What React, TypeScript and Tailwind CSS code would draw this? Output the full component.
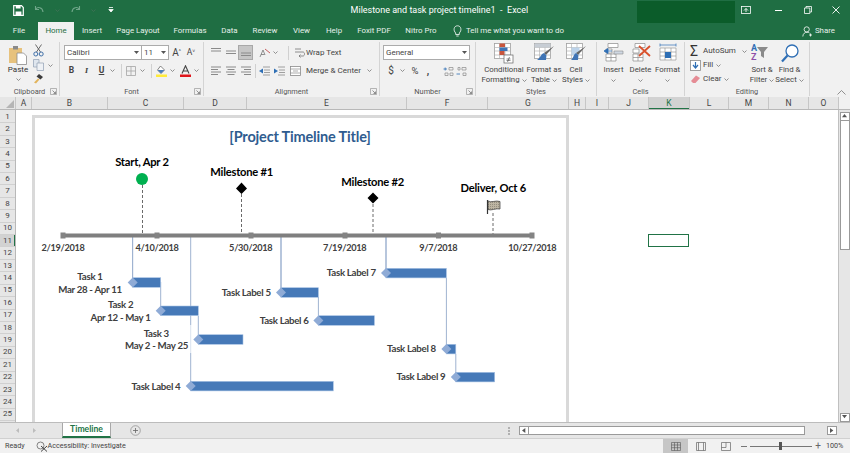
import type { ReactNode } from "react";

const uiFont = "font-['Roboto','Open_Sans',sans-serif]";
const chartFont = "font-['Lato','Open_Sans',sans-serif]";

const tabs = [
  { label: "File", w: "w-[38px]" },
  { label: "Home", w: "w-[36px]", active: true },
  { label: "Insert", w: "w-[36px]" },
  { label: "Page Layout", w: "w-[56px]" },
  { label: "Formulas", w: "w-[48px]" },
  { label: "Data", w: "w-[31px]" },
  { label: "Review", w: "w-[40px]" },
  { label: "View", w: "w-[33px]" },
  { label: "Help", w: "w-[32px]" },
  { label: "Foxit PDF", w: "w-[48px]" },
  { label: "Nitro Pro", w: "w-[46px]" },
];

const columns = [
  { label: "A", w: "w-[16px]" },
  { label: "B", w: "w-[76px]" },
  { label: "C", w: "w-[76px]" },
  { label: "D", w: "w-[63px]" },
  { label: "E", w: "w-[160px]" },
  { label: "F", w: "w-[81px]" },
  { label: "G", w: "w-[81px]" },
  { label: "H", w: "w-[17px]" },
  { label: "I", w: "w-[23px]" },
  { label: "J", w: "w-[40px]" },
  { label: "K", w: "w-[41px]", active: true },
  { label: "L", w: "w-[39px]" },
  { label: "M", w: "w-[40px]" },
  { label: "N", w: "w-[40px]" },
  { label: "O", w: "w-[30px]" },
];

const rows = Array.from({ length: 25 }, (_, i) => i + 1);

// bar: x1, x2, top, parent line start
const bars = [
  { x1: 132.7, x2: 160.7, y: 277.7, from: 237 },
  { x1: 160.7, x2: 198.3, y: 306, from: 282 },
  { x1: 198.3, x2: 243, y: 334.7, from: 316 },
  { x1: 281, x2: 318.4, y: 287.7, from: 237 },
  { x1: 318.4, x2: 374.4, y: 315.7, from: 297 },
  { x1: 386, x2: 446.4, y: 268.3, from: 237 },
  { x1: 446.4, x2: 455.8, y: 344.3, from: 278 },
  { x1: 455.8, x2: 494.7, y: 372.3, from: 354 },
];

const Caret = ({ className = "" }: { className?: string }) => (
  <svg width="5" height="3" viewBox="0 0 5 3" className={className}>
    <path d="M0.5 0.5 L2.5 2.5 L4.5 0.5" fill="none" stroke="#777" strokeWidth="0.8" />
  </svg>
);

const Sep = () => <div className="w-px h-[14px] bg-[#d0d0d0]" />;

const Launcher = () => (
  <svg width="7" height="7" viewBox="0 0 7 7">
    <path d="M0.5 0.5 H6.5 V6.5 H0.5 Z" fill="none" stroke="#999" strokeWidth="0.7" />
    <path d="M2.5 2.5 L5.5 5.5 M5.5 3.5 V5.5 H3.5" fill="none" stroke="#666" strokeWidth="0.7" />
  </svg>
);

const Group = ({ w, label, launcher, children }: { w: string; label: string; launcher?: boolean; children: ReactNode }) => (
  <div className={`${w} h-[54px] mt-[2px] border-r border-[#d4d4d4] flex flex-col shrink-0`}>
    <div className="h-[45px]">{children}</div>
    <div className="relative h-[9px] flex items-center justify-center text-[7.4px] leading-none text-[#555]">
      {label}
      {launcher && (
        <span className="absolute right-[2px] top-px">
          <Launcher />
        </span>
      )}
    </div>
  </div>
);

const Lines = ({ d }: { d: string }) => (
  <svg width="12" height="11" viewBox="0 0 12 11">
    <path d={d} fill="none" stroke="#8a8a8a" strokeWidth="1" />
  </svg>
);

const Cell = ({ w = "w-[15px]", children, className = "" }: { w?: string; children?: ReactNode; className?: string }) => (
  <div className={`${w} h-[15px] flex items-center justify-center shrink-0 ${className}`}>{children}</div>
);

const BigButton = ({ icon, line1, line2, w }: { icon: ReactNode; line1: string; line2?: string; w: string }) => (
  <div className={`${w} flex flex-col items-center shrink-0`}>
    <div className="h-[22px] flex items-center justify-center">{icon}</div>
    <div className="text-[7.8px] leading-[10px] text-[#444] mt-px whitespace-nowrap">{line1}</div>
    <div className="h-[10px] flex items-center gap-[2px] text-[7.8px] leading-[10px] text-[#444] whitespace-nowrap">
      {line2}
      <Caret />
    </div>
  </div>
);

const GridIcon = ({ children }: { children?: ReactNode }) => (
  <svg width="22" height="22" viewBox="0 0 22 22">
    <rect x="1.5" y="1.5" width="16" height="15" fill="#fff" stroke="#a0a0a0" strokeWidth="0.8" />
    <path d="M1.5 5.5 H17.5 M1.5 9 H17.5 M1.5 13 H17.5 M6.5 1.5 V16.5 M12 1.5 V16.5" stroke="#b5b5b5" strokeWidth="0.7" />
    {children}
  </svg>
);

const Header = () => (
  <div className="bg-[#1f6e43] text-white h-[40px] shrink-0">
    <div className="h-[22px] flex items-start">
      <div className="w-[352px] h-[20px] flex items-center pl-[13px] gap-[10px]">
        <svg width="11" height="11" viewBox="0 0 11 11">
          <path d="M0.7 0.7 H8.5 L10.3 2.5 V10.3 H0.7 Z" fill="none" stroke="#fff" strokeWidth="1.2" />
          <path d="M2.8 0.9 H7.6 V3.6 H2.8 Z M2.6 6.4 H8.4 V10 H2.6 Z" fill="#fff" />
        </svg>
        <svg width="11" height="10" viewBox="0 0 11 10">
          <path d="M1.5 1 V4.5 H5 M1.8 4.3 C3.5 1.5 8.5 2 9 7" fill="none" stroke="#6fa689" strokeWidth="1.1" />
        </svg>
        <Caret className="opacity-40" />
        <svg width="11" height="10" viewBox="0 0 11 10">
          <path d="M9.5 1 V4.5 H6 M9.2 4.3 C7.5 1.5 2.5 2 2 7" fill="none" stroke="#6fa689" strokeWidth="1.1" />
        </svg>
        <Caret className="opacity-40" />
        <svg width="6" height="6" viewBox="0 0 6 6" className="ml-[2px]">
          <path d="M1 0.5 H5 M0.8 2.5 H5.2 L3 5 Z" stroke="#fff" strokeWidth="0.8" fill="#fff" />
        </svg>
      </div>
      <div className="w-[288px] h-[20px] flex items-center text-[9px] leading-none whitespace-nowrap">
        Milestone and task project timeline1&nbsp; -&nbsp; Excel
      </div>
      <div className="w-[98px] h-[22px] mt-px bg-[#0b5c2a]" />
      <div className="flex-1 h-[20px] flex items-center">
        <Cell w="w-[22px]">
          <svg width="10" height="8" viewBox="0 0 10 8">
            <rect x="0.5" y="0.5" width="9" height="7" fill="none" stroke="#fff" strokeWidth="0.8" />
            <path d="M3 4.5 L5 2.5 L7 4.5 M5 2.5 V6" fill="none" stroke="#fff" strokeWidth="0.9" />
          </svg>
        </Cell>
        <Cell w="w-[29px]" className="ml-[7px]">
          <div className="w-[7px] h-px bg-white" />
        </Cell>
        <Cell w="w-[29px]">
          <svg width="8" height="8" viewBox="0 0 8 8">
            <path d="M0.5 2 H5.8 V7.5 H0.5 Z M2 2 V0.5 H7.5 V6 H5.8" fill="none" stroke="#fff" strokeWidth="0.8" />
          </svg>
        </Cell>
        <Cell w="w-[28px]">
          <svg width="8" height="8" viewBox="0 0 8 8">
            <path d="M0.5 0.5 L7.5 7.5 M7.5 0.5 L0.5 7.5" stroke="#fff" strokeWidth="0.9" />
          </svg>
        </Cell>
      </div>
    </div>
    <div className="h-[18px] flex text-[7.9px] leading-none">
      {tabs.map((t) => (
        <div
          key={t.label}
          className={`${t.w} h-full flex items-center justify-center whitespace-nowrap ${
            t.active ? "bg-[#f1f1f1] text-[#1f6e43]" : "text-[#e6f0ea]"
          }`}
        >
          {t.label}
        </div>
      ))}
      <div className="ml-[9px] flex items-center gap-[4px] text-[#e6f0ea]">
        <svg width="9" height="12" viewBox="0 0 9 12">
          <path d="M2.7 8 C0 5.5 0.8 0.8 4.5 0.8 C8.2 0.8 9 5.5 6.3 8 V9.5 H2.7 Z M3.3 11 H5.7" fill="none" stroke="#fff" strokeWidth="0.8" />
        </svg>
        <span className="whitespace-nowrap">Tell me what you want to do</span>
      </div>
      <div className="ml-auto mr-[15px] flex items-center gap-[2px] text-[#e6f0ea]">
        <svg width="11" height="11" viewBox="0 0 11 11">
          <circle cx="4.7" cy="3.4" r="2.6" fill="none" stroke="#fff" strokeWidth="0.8" />
          <path d="M0.8 10.5 C1 7.5 3 6.2 5 6.2 C6 6.2 6.8 6.5 7.5 7 M8.5 7.5 V10.5 M7 9 H10" fill="none" stroke="#fff" strokeWidth="0.8" />
        </svg>
        Share
      </div>
    </div>
  </div>
);

const Clipboard = () => (
  <Group w="w-[60px]" label="Clipboard" launcher>
    <div className="flex pl-[5px]">
      <div className="w-[26px] flex flex-col items-center">
        <svg width="20" height="20" viewBox="0 0 20 20" className="mt-[3px]">
          <path d="M1 3 H14 V18 H1 Z" fill="#e7c27d" />
          <rect x="5" y="1" width="5" height="3.5" fill="#8a8a8a" />
          <path d="M9 8 H15.5 L18.5 11 V19.5 H9 Z" fill="#fff" stroke="#8a8a8a" strokeWidth="0.8" />
        </svg>
        <div className="text-[8px] leading-[10px] text-[#333]">Paste</div>
        <Caret className="mt-[3px]" />
      </div>
      <div className="flex flex-col pl-[2px] pt-[2px] gap-[2px]">
        <svg width="11" height="13" viewBox="0 0 11 13">
          <path d="M2.5 0.5 L7.5 8 M8.5 0.5 L3.5 8" stroke="#5a5a5a" strokeWidth="0.9" />
          <circle cx="2.8" cy="10" r="2" fill="none" stroke="#3f6fa8" strokeWidth="1" />
          <circle cx="8.2" cy="10" r="2" fill="none" stroke="#3f6fa8" strokeWidth="1" />
        </svg>
        <div className="flex items-center gap-[4px]">
          <svg width="11" height="12" viewBox="0 0 11 12">
            <path d="M0.5 0.5 H6 V8 H0.5 Z" fill="#dfe6ee" stroke="#8f9fb3" strokeWidth="0.7" />
            <path d="M4 4 H10.5 V11.5 H4 Z" fill="#eef1f5" stroke="#8f9fb3" strokeWidth="0.7" />
          </svg>
          <Caret />
        </div>
        <svg width="11" height="11" viewBox="0 0 11 11">
          <path d="M6 1 L10 4 L7.5 6.5 L3.5 3.5 Z" fill="#3b3b3b" />
          <path d="M5 5.5 L1 9.5 L3 10.5 L6.5 6.5 Z" fill="#e2b45c" />
        </svg>
      </div>
    </div>
  </Group>
);

const FontGroup = () => (
  <Group w="w-[144px]" label="Font" launcher>
    <div className="pl-[4px] pt-[3px] flex flex-col gap-[3px]">
      <div className="flex items-center">
        <div className="w-[78px] h-[15px] bg-white border border-[#ababab] flex items-center justify-between px-[2px] text-[8px] text-[#444]">
          Calibri
          <svg width="5" height="3" viewBox="0 0 5 3"><path d="M0 0 H5 L2.5 3 Z" fill="#555" /></svg>
        </div>
        <div className="w-[27px] h-[15px] bg-white border border-l-0 border-[#ababab] flex items-center justify-between px-[2px] text-[8px] text-[#444]">
          11
          <svg width="5" height="3" viewBox="0 0 5 3"><path d="M0 0 H5 L2.5 3 Z" fill="#555" /></svg>
        </div>
        <div className="w-[15px] text-center text-[10px] leading-none text-[#444]">A<sup className="text-[5px]">^</sup></div>
        <div className="w-[14px] text-center text-[8.5px] leading-none text-[#444]">A<sup className="text-[5px]">˅</sup></div>
      </div>
      <div className="flex items-center text-[8.5px] text-[#444]">
        <Cell className="font-bold">B</Cell>
        <Cell className="italic font-serif font-bold">I</Cell>
        <Cell className="underline font-bold">U</Cell>
        <Cell w="w-[7px]"><Caret /></Cell>
        <div className="ml-[5px]"><Sep /></div>
        <Cell w="w-[16px]" className="ml-px">
          <svg width="10" height="10" viewBox="0 0 10 10">
            <path d="M0.5 0.5 H9.5 V9.5 H0.5 Z M5 0.5 V9.5 M0.5 5 H9.5" fill="none" stroke="#a5a5a5" strokeWidth="0.8" />
          </svg>
        </Cell>
        <Cell w="w-[7px]"><Caret /></Cell>
        <div className="ml-[5px]"><Sep /></div>
        <Cell w="w-[16px]" className="ml-px">
          <svg width="11" height="12" viewBox="0 0 11 12">
            <path d="M4.5 1 L8.5 5 L5 8.5 L1.5 5 Z" fill="#fff" stroke="#666" strokeWidth="0.8" />
            <path d="M1.5 5 L8.5 5 L5 8.5 Z" fill="#4a7ebb" />
            <rect x="0" y="9.5" width="11" height="2.5" fill="#ffeb3b" />
          </svg>
        </Cell>
        <Cell w="w-[7px]"><Caret /></Cell>
        <Cell w="w-[15px]" className="ml-[2px]">
          <svg width="11" height="12" viewBox="0 0 11 12">
            <path d="M2 8.5 L5.5 0.8 L9 8.5 M3.3 6 H7.7" fill="none" stroke="#444" strokeWidth="1.1" />
            <rect x="0" y="9.5" width="11" height="2.5" fill="#e0161c" />
          </svg>
        </Cell>
        <Cell w="w-[7px]"><Caret /></Cell>
      </div>
    </div>
  </Group>
);

const Alignment = () => (
  <Group w="w-[176px]" label="Alignment" launcher>
    <div className="pl-[4px] pt-[3px] flex flex-col gap-[3px] text-[8px] text-[#444]">
      <div className="flex items-center">
        <Cell><Lines d="M1 1.5 H11 M1 4 H11" /></Cell>
        <Cell><Lines d="M1 4 H11 M1 6.5 H11" /></Cell>
        <Cell className="bg-[#c6c6c6] border border-[#a8a8a8]"><Lines d="M1 6 H11 M1 8.5 H11" /></Cell>
        <Cell w="w-[14px]" className="ml-[5px]">
          <svg width="12" height="12" viewBox="0 0 12 12">
            <path d="M1 10 L4 3 L6 8 M2 7.5 H5.5" fill="none" stroke="#777" strokeWidth="0.8" />
            <path d="M6 2 L11 6" stroke="#c05050" strokeWidth="0.9" />
          </svg>
        </Cell>
        <Cell w="w-[6px]"><Caret /></Cell>
        <div className="ml-[10px]"><Sep /></div>
        <Cell w="w-[14px]" className="ml-[3px]">
          <svg width="11" height="11" viewBox="0 0 11 11">
            <path d="M1 2 H7 M1 5 H9 C11 5 11 9 9 9 H5 M6.5 7.5 L5 9 L6.5 10.5" fill="none" stroke="#777" strokeWidth="0.8" />
          </svg>
        </Cell>
        <span className="whitespace-nowrap">Wrap Text</span>
      </div>
      <div className="flex items-center">
        <Cell><Lines d="M1 2 H11 M1 4.5 H8 M1 7 H11 M1 9.5 H8" /></Cell>
        <Cell><Lines d="M1 2 H11 M2.5 4.5 H9.5 M1 7 H11 M2.5 9.5 H9.5" /></Cell>
        <Cell><Lines d="M1 2 H11 M4 4.5 H11 M1 7 H11 M4 9.5 H11" /></Cell>
        <div className="ml-[2px]"><Sep /></div>
        <Cell w="w-[15px]" className="ml-px">
          <svg width="11" height="10" viewBox="0 0 11 10">
            <path d="M4 1 H11 M5 4 H11 M5 6.5 H11 M4 9 H11" stroke="#8a8a8a" strokeWidth="0.8" />
            <path d="M0 5 L4 2.5 V7.5 Z" fill="#2f6fb5" />
          </svg>
        </Cell>
        <Cell w="w-[15px]">
          <svg width="11" height="10" viewBox="0 0 11 10">
            <path d="M4 1 H11 M5 4 H11 M5 6.5 H11 M4 9 H11" stroke="#8a8a8a" strokeWidth="0.8" />
            <path d="M4 5 L0 2.5 V7.5 Z" fill="#2f6fb5" />
          </svg>
        </Cell>
        <Cell w="w-[14px]" className="ml-[1px]">
          <svg width="11" height="10" viewBox="0 0 11 10">
            <rect x="0.5" y="0.5" width="10" height="9" fill="#fff" stroke="#8a8a8a" strokeWidth="0.8" />
            <path d="M0.5 3 H10.5 M0.5 7 H10.5 M3 5 H8" stroke="#8a8a8a" strokeWidth="0.7" />
          </svg>
        </Cell>
        <span className="ml-[4px] whitespace-nowrap">Merge &amp; Center</span>
        <Caret className="ml-[6px]" />
      </div>
    </div>
  </Group>
);

const NumberGroup = () => (
  <Group w="w-[96px]" label="Number" launcher>
    <div className="pl-[3px] pt-[3px] flex flex-col gap-[3px] text-[#444]">
      <div className="w-[87px] h-[15px] bg-white border border-[#ababab] flex items-center justify-between px-[2px] text-[8px]">
        General
        <svg width="5" height="3" viewBox="0 0 5 3"><path d="M0 0 H5 L2.5 3 Z" fill="#555" /></svg>
      </div>
      <div className="flex items-center text-[10px] leading-none">
        <Cell w="w-[16px]">$</Cell>
        <Cell w="w-[7px]"><Caret /></Cell>
        <Cell w="w-[16px]" className="ml-px text-[9.5px]">%</Cell>
        <Cell w="w-[8px]" className="ml-px font-bold">,</Cell>
        <Cell w="w-[13px]" className="ml-[10px]">
          <svg width="11" height="10" viewBox="0 0 11 10">
            <path d="M0.5 3 H4 M2.2 1.5 V4.5" stroke="#2f6fb5" strokeWidth="0.8" />
            <path d="M6 1.5 H10 V4 H6 Z M2 7 H5 V9.5 H2 Z M7 7 H10 V9.5 H7 Z" fill="none" stroke="#8a8a8a" strokeWidth="0.7" />
          </svg>
        </Cell>
        <Cell w="w-[13px]">
          <svg width="11" height="10" viewBox="0 0 11 10">
            <path d="M0.5 8 H4" stroke="#2f6fb5" strokeWidth="0.8" />
            <path d="M6 1.5 H10 V4 H6 Z M2 1.5 H4 V4 H2 Z M7 7 H10 V9.5 H7 Z" fill="none" stroke="#8a8a8a" strokeWidth="0.7" />
          </svg>
        </Cell>
      </div>
    </div>
  </Group>
);

const Styles = () => (
  <Group w="w-[121px]" label="Styles">
    <div className="flex pl-[3px]">
      <BigButton
        w="w-[50px]"
        line1="Conditional"
        line2="Formatting"
        icon={
          <GridIcon>
            <rect x="6.5" y="1.5" width="5.5" height="3.5" fill="#c8553d" />
            <rect x="6.5" y="5.5" width="8" height="3.5" fill="#3f74b5" />
            <rect x="6.5" y="9" width="5" height="4" fill="#c8553d" />
            <rect x="11" y="13" width="9" height="8" fill="#fff" stroke="#666" strokeWidth="0.7" />
            <path d="M13.5 17 H17.5 M13.5 18.5 H17.5 M16.5 15 L14.5 20" stroke="#444" strokeWidth="0.6" />
          </GridIcon>
        }
      />
      <BigButton
        w="w-[30px]"
        line1="Format as"
        line2="Table"
        icon={
          <GridIcon>
            <rect x="1.5" y="1.5" width="16" height="4" fill="#c7cdd4" />
            <path d="M21 4 L13 13 L11 11 Z" fill="#666" />
            <path d="M11 11 C8 12 8 15 4 18 H13 C13 15 14 13 13 13 Z" fill="#3f74b5" />
          </GridIcon>
        }
      />
      <BigButton
        w="w-[34px]"
        line1="Cell"
        line2="Styles"
        icon={
          <GridIcon>
            <rect x="6.5" y="5.5" width="8" height="7.5" fill="#bcd3ea" />
            <path d="M21 4 L13 13 L11 11 Z" fill="#666" />
            <path d="M11 11 C8 13 9 15 6 18 H13 C13 15 14 13 13 13 Z" fill="#3f74b5" />
          </GridIcon>
        }
      />
    </div>
  </Group>
);

const CellIcon = ({ children }: { children: ReactNode }) => (
  <svg width="22" height="22" viewBox="0 0 22 22">
    <path d="M5 1.5 H15 V5.5 H5 Z M3 7 H9 V11 H3 Z M3 12 H13 V19 H3 Z M8 12 V19 M3 15.5 H13" fill="#fff" stroke="#8a8a8a" strokeWidth="0.7" />
    {children}
  </svg>
);

const Cells = () => (
  <Group w="w-[88px]" label="Cells">
    <div className="flex pl-[3px]">
      <BigButton
        w="w-[27px]"
        line1="Insert"
        icon={
          <CellIcon>
            <path d="M11 9 H20 V12 H11 Z" fill="#cfd8e3" stroke="#8a8a8a" strokeWidth="0.6" />
            <path d="M1 9 L5 6.5 V11.5 Z M4 9 H9" fill="#2f6fb5" stroke="#2f6fb5" strokeWidth="0.8" />
          </CellIcon>
        }
      />
      <BigButton
        w="w-[27px]"
        line1="Delete"
        icon={
          <CellIcon>
            <path d="M9 4 L20 14 M20 4 L9 14" stroke="#d9512c" strokeWidth="1.8" />
          </CellIcon>
        }
      />
      <BigButton
        w="w-[27px]"
        line1="Format"
        icon={
          <svg width="20" height="20" viewBox="0 0 20 20">
            <path d="M2 5 H18 V17 H2 Z M7 5 V17 M13 5 V17 M2 9 H18 M2 13 H18" fill="#fff" stroke="#8a8a8a" strokeWidth="0.6" />
            <rect x="7" y="9" width="6" height="6" fill="#2f6fb5" />
            <path d="M2 2 H18 M2 0.5 V3.5 M18 0.5 V3.5" stroke="#2f6fb5" strokeWidth="0.7" />
          </svg>
        }
      />
    </div>
  </Group>
);

const Editing = () => (
  <Group w="w-[125px]" label="Editing">
    <div className="flex pl-[5px]">
      <div className="w-[58px] flex flex-col text-[8px] text-[#444] pt-[2px]">
        <div className="h-[14px] flex items-center">
          <span className="w-[13px] text-[14px] leading-none text-[#333]">Σ</span>
          <span>AutoSum</span>
          <Caret className="ml-[6px]" />
        </div>
        <div className="h-[14px] flex items-center">
          <svg width="11" height="11" viewBox="0 0 11 11" className="mr-[2px]">
            <rect x="0.5" y="0.5" width="10" height="10" fill="#fff" stroke="#8a8a8a" strokeWidth="0.8" />
            <path d="M5.5 2 V7 M3 5 L5.5 8 L8 5" fill="none" stroke="#2f6fb5" strokeWidth="1.2" />
          </svg>
          <span>Fill</span>
          <Caret className="ml-[3px]" />
        </div>
        <div className="h-[14px] flex items-center">
          <svg width="11" height="10" viewBox="0 0 11 10" className="mr-[2px]">
            <path d="M1 7 L6 1.5 L10 4 L5.5 9 H3 Z" fill="#e58c95" />
          </svg>
          <span>Clear</span>
          <Caret className="ml-[3px]" />
        </div>
      </div>
      <BigButton
        w="w-[28px]"
        line1="Sort &"
        line2="Filter"
        icon={
          <div className="relative w-[22px] h-[22px] flex">
            <div className="flex flex-col text-[9px] leading-[9px] font-bold mt-[2px]">
              <span className="text-[#2f6fb5]">A</span>
              <span className="text-[#8e4fa8]">Z</span>
            </div>
            <svg width="11" height="12" viewBox="0 0 11 12" className="mt-[5px]">
              <path d="M0 0 H11 L7 5 V11 L4 9 V5 Z" fill="#8a8a8a" />
            </svg>
          </div>
        }
      />
      <BigButton
        w="w-[27px]"
        line1="Find &"
        line2="Select"
        icon={
          <svg width="20" height="20" viewBox="0 0 20 20">
            <circle cx="12" cy="8" r="6" fill="#fff" stroke="#2f6fb5" strokeWidth="1.3" />
            <path d="M7.5 12.5 L2 18.5" stroke="#2f6fb5" strokeWidth="2.2" />
          </svg>
        }
      />
    </div>
  </Group>
);

const Ribbon = () => (
  <div className="relative h-[57px] shrink-0 bg-[#f1f1f1] flex">
    <Clipboard />
    <FontGroup />
    <Alignment />
    <NumberGroup />
    <Styles />
    <Cells />
    <Editing />
    <svg width="9" height="5" viewBox="0 0 9 5" className="absolute right-[4px] bottom-[2px]">
      <path d="M0.5 4.5 L4.5 0.5 L8.5 4.5" fill="none" stroke="#777" strokeWidth="0.8" />
    </svg>
  </div>
);

const ColumnHeaders = () => (
  <div className="h-[13px] shrink-0 flex bg-[#e6e6e6] border-b border-[#b8b8b8] text-[8.5px] leading-none text-[#444]">
    <div className="w-[16px] h-full flex items-end justify-end p-px border-r border-[#c6c6c6] shrink-0">
      <svg width="8" height="8" viewBox="0 0 8 8"><path d="M8 0 V8 H0 Z" fill="#b5b5b5" /></svg>
    </div>
    {columns.map((c) => (
      <div
        key={c.label}
        className={`${c.w} h-full flex items-center justify-center border-r shrink-0 ${
          c.active ? "bg-[#d2d2d2] border-[#c6c6c6] shadow-[inset_0_-1px_0_#217346] text-[#217346]" : "border-[#c6c6c6]"
        }`}
      >
        {c.label}
      </div>
    ))}
    <div className="flex-1 bg-[#f1f1f1]" />
  </div>
);

const RowHeaders = () => (
  <div className="w-[16px] shrink-0 flex flex-col bg-[#e6e6e6] border-r border-[#b8b8b8] pt-px">
    {rows.map((r) => (
      <div
        key={r}
        className={`h-[12.42px] shrink-0 flex items-center justify-center border-b border-[#d0d0d0] text-[8px] leading-none text-[#444] ${
          r === 11 ? "bg-[#d2d2d2] shadow-[inset_-1px_0_0_#217346]" : ""
        }`}
      >
        {r}
      </div>
    ))}
  </div>
);

const TimelineDrawing = () => (
  <svg width="531" height="317" viewBox="35 118 531 317" className="absolute left-0 top-0">
    <defs>
      <pattern id="flag" width="2" height="2" patternUnits="userSpaceOnUse">
        <rect width="2" height="2" fill="#bdb5a3" />
        <rect width="1" height="1" fill="#948e7f" />
      </pattern>
    </defs>
    {/* dashed milestone stems */}
    <path d="M142.5 185 V235 M241.5 194 V235 M373 204 V235 M493 213 V235" stroke="#6a6a6a" strokeWidth="1" strokeDasharray="3 2" />

    {/* dependency lines */}
    <path d="M132.5 237 V282 M281 237 V292 M386 237 V273 M190.7 237 V325 M190.7 353 V386" stroke="#9fb3d1" strokeWidth="1" fill="none" />
    <path d="M190.7 325 V353" stroke="#dbe3ef" strokeWidth="1" />
    {bars.map((b) => (
      <path key={b.x1} d={`M${b.x1} ${b.from} V${b.y + 5}`} stroke="#9fb3d1" strokeWidth="1" fill="none" />
    ))}

    {/* axis */}
    <rect x="62" y="233.5" width="471" height="4" fill="#7f7f7f" />
    {[63, 157, 251, 345, 438.5, 532].map((x) => (
      <rect key={x} x={x - 2.5} y="232.5" width="5" height="6" fill="#848484" />
    ))}

    <circle cx="142" cy="179" r="6" fill="#00b050" />
    <path d="M241.5 182.5 L247 188.5 L241.5 194 L236 188.5 Z M373 192.5 L378.5 198 L373 203.5 L367.5 198 Z" fill="#000" />

    {/* flag */}
    <path d="M487.5 200 V214" stroke="#333" strokeWidth="1.2" />
    <path d="M488 201 C491 203 496 200 500 201.5 V209 C496 208 491 211 488 209.5 Z" fill="url(#flag)" stroke="#333" strokeWidth="0.7" />

    {/* task bars */}
    {bars.map((b) => (
      <g key={b.x2}>
        <rect x={b.x1} y={b.y} width={b.x2 - b.x1} height="9.6" fill="#4679b8" stroke="#a9c4e4" strokeWidth="0.6" />
        <path d={`M${b.x1 - 5} ${b.y + 4.8} L${b.x1} ${b.y - 0.2} L${b.x1 + 5} ${b.y + 4.8} L${b.x1} ${b.y + 9.8} Z`} fill="#8fabd6" />
      </g>
    ))}
    <rect x="190.7" y="381.3" width="142.6" height="9.6" fill="#4679b8" stroke="#a9c4e4" strokeWidth="0.6" />
    <path d="M185.7 386.1 L190.7 381.1 L195.7 386.1 L190.7 391.1 Z" fill="#8fabd6" />
  </svg>
);

const chartLabel = "absolute -translate-x-1/2 -translate-y-1/2 whitespace-nowrap leading-none font-bold";
const heading = `${chartLabel} text-[11.2px] tracking-[-0.22px] text-black`;
const date = `${chartLabel} text-[9.2px] tracking-[-0.3px] text-[#404040]`;
const task = `${chartLabel} text-[9.7px] tracking-[-0.3px] text-[#404040]`;

const Chart = () => (
  <div className={`absolute left-[16px] top-[5px] w-[537px] h-[323px] bg-white border-[3px] border-[#d9d9d9] ${chartFont}`}>
    <TimelineDrawing />
    <div className={`${chartLabel} left-[265px] top-[19px] text-[14.5px] tracking-[-0.17px] text-[#2f5c8f]`}>[Project Timeline Title]</div>

    <div className={`${heading} left-[107px] top-[44px]`}>Start, Apr 2</div>
    <div className={`${heading} left-[206.7px] top-[53.7px]`}>Milestone #1</div>
    <div className={`${heading} left-[337.7px] top-[63.7px]`}>Milestone #2</div>
    <div className={`${heading} left-[458.3px] top-[70px]`}>Deliver, Oct 6</div>

    <div className={`${date} left-[28px] top-[130px]`}>2/19/2018</div>
    <div className={`${date} left-[122px] top-[130px]`}>4/10/2018</div>
    <div className={`${date} left-[215.7px] top-[130px]`}>5/30/2018</div>
    <div className={`${date} left-[309.7px] top-[130px]`}>7/19/2018</div>
    <div className={`${date} left-[403.3px] top-[130px]`}>9/7/2018</div>
    <div className={`${date} left-[497.3px] top-[130px]`}>10/27/2018</div>

    <div className={`${task} left-[55px] top-[159px]`}>Task 1</div>
    <div className={`${task} left-[55px] top-[171.5px]`}>Mar 28 - Apr 11</div>
    <div className={`${task} left-[85.7px] top-[187px]`}>Task 2</div>
    <div className={`${task} left-[85.5px] top-[199.5px]`}>Apr 12 - May 1</div>
    <div className={`${task} left-[121.3px] top-[215.5px]`}>Task 3</div>
    <div className={`${task} left-[121.5px] top-[228px]`}>May 2 - May 25</div>
    <div className={`${task} left-[121px] top-[269px]`}>Task Label 4</div>
    <div className={`${task} left-[211.3px] top-[174.5px]`}>Task Label 5</div>
    <div className={`${task} left-[249.2px] top-[202.5px]`}>Task Label 6</div>
    <div className={`${task} left-[316.3px] top-[155px]`}>Task Label 7</div>
    <div className={`${task} left-[376.5px] top-[231px]`}>Task Label 8</div>
    <div className={`${task} left-[386px] top-[259px]`}>Task Label 9</div>
  </div>
);

const ScrollBox = ({ dir }: { dir: "up" | "down" | "left" | "right" }) => {
  const d = { up: "M0 4 L3 0 L6 4 Z", down: "M0 0 L3 4 L6 0 Z", left: "M4 0 L0 3 L4 6 Z", right: "M0 0 L4 3 L0 6 Z" }[dir];
  return (
    <div className="w-[10px] h-[9px] shrink-0 bg-white border border-[#9a9a9a] flex items-center justify-center">
      <svg width="5" height="5" viewBox="0 0 6 6"><path d={d} fill="#555" /></svg>
    </div>
  );
};

const Sheet = () => (
  <div className="h-[312px] shrink-0 flex">
    <RowHeaders />
    <div className="relative flex-1 bg-white overflow-hidden">
      <Chart />
      <div className="absolute left-[632px] top-[124px] w-[41px] h-[13px] border-[1.5px] border-[#217346]" />
    </div>
    <div className="w-[12px] shrink-0 bg-[#e6e6e6] border-l border-[#c0c0c0] flex flex-col items-center pt-[2px]">
      <ScrollBox dir="up" />
      <div className="w-[10px] h-[129px] bg-white border border-t-0 border-[#9a9a9a] shrink-0" />
      <div className="flex-1" />
      <ScrollBox dir="down" />
    </div>
  </div>
);

const SheetTabs = () => (
  <div className="h-[17px] shrink-0 bg-[#e6e6e6] border-t border-[#bcbcbc] border-b border-b-[#d0d0d0] flex items-start">
    <div className="w-[62px] h-full flex items-center pl-[16px] gap-[14px]">
      <svg width="3" height="5" viewBox="0 0 3 5"><path d="M3 0 L0 2.5 L3 5 Z" fill="#bdbdbd" /></svg>
      <svg width="3" height="5" viewBox="0 0 3 5"><path d="M0 0 L3 2.5 L0 5 Z" fill="#bdbdbd" /></svg>
    </div>
    <div className={`w-[49px] h-[15px] bg-white border-x border-[#a8a8a8] border-b-2 border-b-[#217346] flex items-center justify-center text-[8.6px] leading-none font-bold text-[#217346] ${chartFont}`}>
      Timeline
    </div>
    <div className="ml-[19px] h-full flex items-center">
      <svg width="11" height="11" viewBox="0 0 11 11">
        <circle cx="5.5" cy="5.5" r="4.8" fill="none" stroke="#8a8a8a" strokeWidth="0.7" />
        <path d="M5.5 3 V8 M3 5.5 H8" stroke="#666" strokeWidth="0.8" />
      </svg>
    </div>
    <div className="ml-[367px] h-full flex items-center">
      <div className="w-[2px] h-[8px] border-l-2 border-dotted border-[#b0b0b0]" />
    </div>
    <div className="ml-[9px] h-full flex items-center">
      <ScrollBox dir="left" />
      <div className="w-[276px] h-[9px] bg-white border border-l-0 border-[#9a9a9a]" />
      <div className="w-[22px]" />
      <ScrollBox dir="right" />
    </div>
  </div>
);

const StatusBar = () => (
  <div className="flex-1 bg-[#f1f1f1] flex items-center text-[7.2px] leading-none text-[#444]">
    <span className="ml-[5px]">Ready</span>
    <svg width="12" height="11" viewBox="0 0 12 11" className="ml-[11px]">
      <circle cx="4.5" cy="4.5" r="3.5" fill="none" stroke="#666" strokeWidth="0.8" />
      <path d="M5 5 L11 10.5 M11 5 L5 10.5" stroke="#444" strokeWidth="1" />
    </svg>
    <span className="ml-0 tracking-[-0.03px]">Accessibility: Investigate</span>
    <div className="ml-auto w-[187px] flex items-center h-full">
      <div className="w-[25px] h-full bg-[#c6c6c6] flex items-center justify-center">
        <svg width="10" height="9" viewBox="0 0 10 9">
          <path d="M0.5 0.5 H9.5 V8.5 H0.5 Z M3.5 0.5 V8.5 M6.5 0.5 V8.5 M0.5 3 H9.5 M0.5 5.7 H9.5" fill="none" stroke="#555" strokeWidth="0.6" />
        </svg>
      </div>
      <div className="w-[25px] h-full flex items-center justify-center">
        <svg width="10" height="9" viewBox="0 0 10 9">
          <path d="M0.5 0.5 H9.5 V8.5 H0.5 Z M2.5 0.5 V8.5 M7.5 0.5 V8.5" fill="none" stroke="#666" strokeWidth="0.7" />
        </svg>
      </div>
      <div className="w-[25px] h-full flex items-center justify-center">
        <svg width="10" height="9" viewBox="0 0 10 9">
          <path d="M0.5 0.5 H9.5 V8.5 H0.5 Z M0.5 5.5 H5 V0.5" fill="none" stroke="#666" strokeWidth="0.7" />
        </svg>
      </div>
      <span className="ml-[3px] w-[6px] h-px bg-[#777]" />
      <div className="relative ml-[3px] w-[62px] h-px bg-[#777]">
        <div className="absolute left-[29px] -top-[3.5px] w-[3px] h-[8px] bg-[#555]" />
      </div>
      <span className="ml-[3px] w-[6px] text-center text-[10px] text-[#666]">+</span>
      <span className="ml-[5px]">100%</span>
    </div>
  </div>
);

export default function App() {
  return (
    <div className={`w-[850px] h-[453px] flex flex-col overflow-hidden bg-white ${uiFont}`}>
      <Header />
      <Ribbon />
      <ColumnHeaders />
      <Sheet />
      <SheetTabs />
      <StatusBar />
    </div>
  );
}
